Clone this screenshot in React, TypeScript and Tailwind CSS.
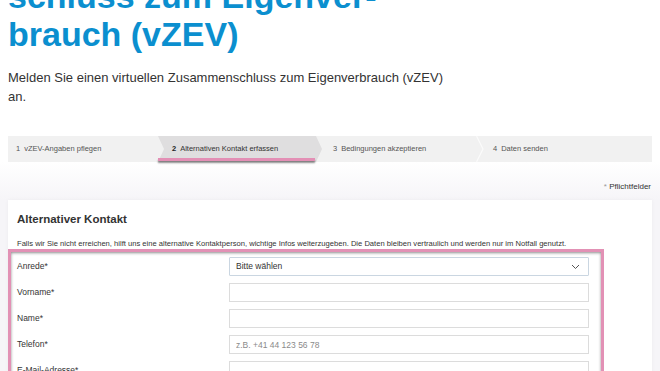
import React from "react";

const steps = [
  { n: "1", label: "vZEV-Angaben pflegen", w: "w-[150px]", pl: "pl-2" },
  { n: "2", label: "Alternativen Kontakt erfassen", w: "w-[164px]", pl: "pl-[14px]", active: true },
  { n: "3", label: "Bedingungen akzeptieren", w: "w-[162px]", pl: "pl-[11px]", sep: true },
  { n: "4", label: "Daten senden", w: "flex-1", pl: "pl-[9px]" },
];

const fields = [
  { label: "Vorname*", placeholder: "" },
  { label: "Name*", placeholder: "" },
  { label: "Telefon*", placeholder: "z.B. +41 44 123 56 78" },
  { label: "E-Mail-Adresse*", placeholder: "" },
];

export default function App() {
  return (
    <div className="w-[660px] h-[371px] overflow-hidden bg-white text-[#333] font-['Liberation_Sans',Arial,sans-serif]">
      {/* Heading */}
      <h1 className="mt-[-23px] px-2 text-[34px] leading-[38px] font-bold text-[#0b8fcf]">
        <span className="block whitespace-nowrap">schluss zum Eigenver-</span>
        <span className="block">brauch (vZEV)</span>
      </h1>
      <p className="mt-[15px] px-2 w-[470px] text-[13px] leading-[19px] text-[#333]">
        Melden Sie einen virtuellen Zusammenschluss zum Eigenverbrauch (vZEV) an.
      </p>

      {/* Stepper */}
      <div className="mt-[30px] mx-2 flex h-[26px] bg-[#f1f1f1] text-[7.5px] text-[#555]">
        {steps.map((s) => (
          <div key={s.n} className={`relative flex items-center ${s.w} ${s.pl}`}>
            {s.active && (
              <>
                <div className="absolute inset-0 bg-[#dfdedf] [clip-path:polygon(0_0,calc(100%-6px)_0,100%_50%,calc(100%-6px)_100%,0_100%,6px_50%)]" />
                <div className="absolute left-0 bottom-[1px] w-[157px] h-[3px] bg-[#e38fb5] shadow-[0_2px_2px_rgba(0,0,0,0.45)]" />
              </>
            )}
            {s.sep && (
              <svg className="absolute right-0 top-0" width="8" height="26" viewBox="0 0 8 26">
                <path d="M0.5 0 L7 13 L0.5 26" fill="none" stroke="#fbfbfb" strokeWidth="1.2" />
              </svg>
            )}
            <span className="relative whitespace-nowrap">
              <span className={s.active ? "font-bold text-[#222]" : ""}>{s.n}</span>
              <span className={`ml-[4px] ${s.active ? "text-[#333]" : ""}`}>{s.label}</span>
            </span>
          </div>
        ))}
      </div>

      {/* Pflichtfelder */}
      <div className="bg-gradient-to-b from-white to-[#f6f5f8]">
        <div className="pt-[19px] pb-[7px] pr-[9px] text-right text-[8px] leading-[12px] text-[#333]">
          <span className="text-[#999]">*</span> Pflichtfelder
        </div>
      </div>

      <div className="bg-[#f6f5f8] pb-10">
        {/* Card */}
        <div className="mx-2 bg-white shadow-[0_0_4px_rgba(0,0,0,0.04)] pt-[12px]">
          <h2 className="px-[9px] text-[11.5px] leading-[14px] font-bold text-[#333]">Alternativer Kontakt</h2>
          <p className="mt-[13px] px-[9px] text-[7.6px] leading-[10px] text-[#333] whitespace-nowrap">
            Falls wir Sie nicht erreichen, hilft uns eine alternative Kontaktperson, wichtige Infos weiterzugeben. Die Daten bleiben vertraulich und werden nur im Notfall genutzt.
          </p>

          {/* Highlighted form */}
          <div className="w-[596px] border-[3px] border-[#e291b5] shadow-[inset_0_1px_3px_rgba(0,0,0,0.45)] pt-[5px] pl-[6px] pb-4 flex flex-col gap-[7px]">
            <div className="flex items-center">
              <label className="w-[212px] text-[8.5px] text-[#333]">Anrede*</label>
              <div className="w-[360px] h-[19px] border border-[#cad6e1] rounded-[1px] bg-white flex items-center justify-between pl-[6px] pr-[8px]">
                <span className="text-[8.5px] text-[#333]">Bitte wählen</span>
                <svg width="9" height="6" viewBox="0 0 9 6">
                  <path d="M1 1 L4.5 4.5 L8 1" fill="none" stroke="#555" strokeWidth="1" />
                </svg>
              </div>
            </div>
            {fields.map((f) => (
              <div key={f.label} className="flex items-center">
                <label className="w-[212px] text-[8.5px] text-[#333]">{f.label}</label>
                <input
                  className="w-[360px] h-[19px] border border-[#dcdcdc] bg-white pl-[6px] text-[8.5px] text-[#333] placeholder:text-[#8a8a8a] outline-none"
                  placeholder={f.placeholder}
                />
              </div>
            ))}
          </div>
        </div>
      </div>
    </div>
  );
}
